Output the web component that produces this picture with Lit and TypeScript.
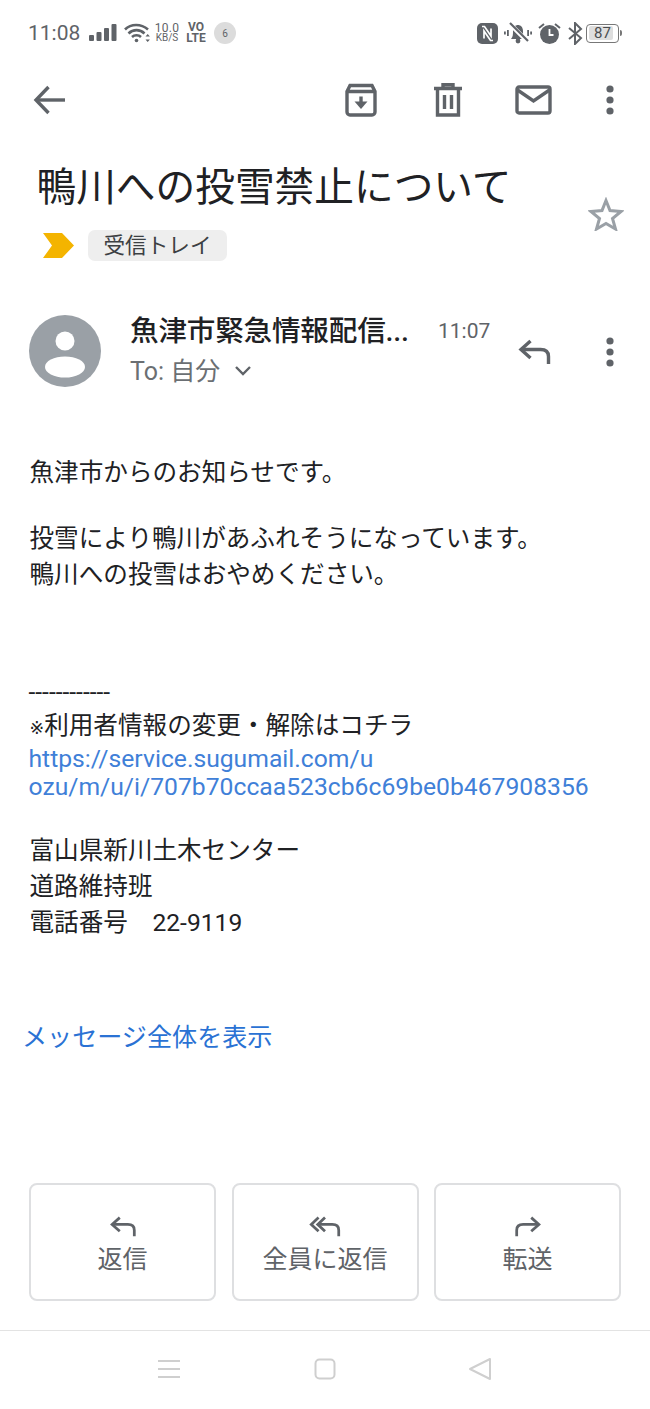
import { LitElement, html, css } from "lit";
import { customElement } from "lit/decorators.js";

const replyIcon = (w: number, h: number) => html`<svg width=${w} height=${h} viewBox="0 0 32 26" fill="none" stroke="#5f6368" stroke-width="3.4"><path d="M12 2 2.5 10.5 12 19"/><path d="M3 10.5H22C27 10.5 30 13 30 17.5V25"/></svg>`;
const dots = html`<svg width="10" height="30" viewBox="0 0 10 30" fill="#5f6368"><circle cx="5" cy="4" r="3.6"/><circle cx="5" cy="15" r="3.6"/><circle cx="5" cy="26" r="3.6"/></svg>`;

@customElement("app-root")
export class AppRoot extends LitElement {
  static styles = css`
    :host { display: block; width: 650px; height: 1409px; background: #fff; overflow: hidden; font-family: Roboto, "Noto Sans CJK JP", sans-serif; color: #202124; }
    .page { display: flex; flex-direction: column; height: 1409px; }
    .status { display: flex; align-items: center; height: 34px; margin-top: 16px; padding: 0 31px 0 28px; color: #5f6368; flex: none; }
    .time { font-size: 21px; width: 61px; }
    .st-left { display: flex; align-items: center; }
    .sig { margin-right: 6px; }
    .speed { display: flex; flex-direction: column; align-items: center; line-height: 10px; margin-left: 4px; width: 26px; }
    .speed b { font-weight: 400; font-size: 12px; letter-spacing: .3px; }
    .speed span { font-size: 10px; }
    .volte { display: flex; flex-direction: column; align-items: center; font-size: 12px; font-weight: 700; line-height: 11px; margin-left: 5px; width: 22px; }
    .badge { width: 22px; height: 22px; border-radius: 50%; background: #dcdcdc; font-size: 10px; display: flex; align-items: center; justify-content: center; margin-left: 7px; }
    .st-right { margin-left: auto; display: flex; align-items: center; }
    .ml6 { margin-left: 6px; }
    .ml7 { margin-left: 7px; }
    .batt { position: relative; width: 33px; height: 19px; border: 1.5px solid #777; border-radius: 4px; font-size: 15px; display: flex; align-items: center; justify-content: center; box-sizing: border-box; margin-left: 3px; color: #4a4d50; }
    .batt::before { content: ""; position: absolute; left: 1.5px; top: 1.5px; bottom: 1.5px; width: 24px; background: #dedede; border-radius: 2px; }
    .batt span { position: relative; }
    .batt::after { content: ""; position: absolute; right: -3.5px; top: 5px; width: 2px; height: 6px; background: #777; border-radius: 0 2px 2px 0; }
    .toolbar { display: flex; align-items: center; height: 40px; margin-top: 30px; padding: 0 35px 0 33px; flex: none; }
    .tb-right { margin-left: auto; display: flex; align-items: center; }
    .trash { margin-left: 55px; }
    .mail { margin-left: 52px; }
    .tdots { display: block; margin-left: 53px; height: 30px; }
    .subject-wrap { position: relative; flex: none; padding: 0 0 0 36.5px; margin-top: 42px; }
    h1 { margin: 0; font-size: 39.7px; font-weight: 400; line-height: 52px; color: #202124; white-space: nowrap; }
    .star { position: absolute; right: 26px; top: 35px; }
    .labels { display: flex; align-items: center; margin-top: 15px; padding-left: 43px; flex: none; height: 32px; }
    .chip { margin-left: 14px; background: #eeeeee; border-radius: 7px; height: 31px; width: 139px; font-size: 21.6px; line-height: 31px; text-align: center; color: #3c4043; }
    .sender { display: flex; height: 72px; margin-top: 54px; padding-left: 29px; flex: none; position: relative; }
    .who { margin-left: 29px; width: 370px; flex: none; }
    .nameline { display: flex; align-items: center; height: 40px; margin-top: -7px; }
    .name { font-size: 28.6px; font-weight: 500; color: #202124; white-space: nowrap; flex: none; width: 281px; overflow: hidden; letter-spacing: -.2px; }
    .t { margin-left: 27px; margin-top: 5px; font-size: 21px; color: #5f6368; white-space: nowrap; flex: none; }
    .to { display: flex; align-items: center; font-size: 25px; color: #6b6f73; height: 36px; margin-top: 3px; }
    .to svg { margin-left: 15px; margin-top: 3px; }
    .s-actions { position: absolute; left: 518px; top: 22px; display: flex; align-items: center; gap: 54px; }
    .d { display: block; height: 30px; }
    .body { padding-left: 29.5px; margin-top: 68px; font-size: 24.6px; line-height: 36px; color: #202124; flex: none; }
    .body p { margin: 0; white-space: nowrap; }
    .body .gap1 { margin-top: 30px; }
    .body .gap2 { margin-top: 82px; }
    .body .rule { line-height: 34px; height: 34px; font-size: 24.6px; margin-left: -1px; }
    .body .note { line-height: 34px; height: 36px; }
    .kome { font-family: "DejaVu Sans", sans-serif; font-size: 17.5px; }
    a { color: #3f80d8; text-decoration: none; font-size: 24.7px; line-height: 28px; display: block; white-space: nowrap; margin-left: -1px; }
    .body .gap3 { margin-top: 32px; }
    .more { margin-top: 79px; padding-left: 22px; font-size: 25.1px; line-height: 36px; color: #2a72d4; flex: none; }
    .bottom { margin-top: auto; flex: none; }
    .btns { display: flex; gap: 15.5px; padding-left: 29px; }
    .btn { width: 187px; height: 118px; box-sizing: border-box; border: 2px solid #dedfe1; border-radius: 8px; display: flex; flex-direction: column; align-items: center; padding-top: 31px; font-size: 25px; line-height: 36px; color: #5f6368; }
    .btn svg { display: block; margin-bottom: 5px; }
    .nav { border-top: 1.5px solid #e3e3e3; margin-top: 29px; height: 79px; box-sizing: border-box; display: flex; align-items: center; padding: 0 158px 3px 157px; justify-content: space-between; }
  `;

  render() {
    return html`<div class="page">
      <div class="status">
        <div class="st-left">
          <span class="time">11:08</span>
          <svg class="sig" width="29" height="20" viewBox="0 0 29 20" fill="#5f6368"><rect x="0" y="12" width="5" height="6" rx="1"/><rect x="7.500" y="9" width="5" height="9" rx="1"/><rect x="15" y="5" width="5" height="13" rx="1"/><rect x="22.500" y="1" width="5" height="17" rx="1"/></svg>
          <svg width="26" height="22" viewBox="0 0 26 22" fill="none" stroke="#5f6368" stroke-width="2.600"><path d="M1 7.500C7 1.500 17 1.500 24 7.500"/><path d="M4.500 11.500C9 7 16 7 20.500 11.500"/><path d="M8 15C10.500 12.700 14.500 12.700 17 15"/><circle cx="12.500" cy="18.500" r="1.800" fill="#5f6368" stroke="none"/><path d="M21.500 14.500l2.200-2.500 2.200 2.500zM21.500 17.500l2.200 2.500 2.200-2.500z" fill="#5f6368" stroke="none"/></svg>
          <div class="speed"><b>10.0</b><span>KB/S</span></div>
          <div class="volte"><span>VO</span><span>LTE</span></div>
          <div class="badge">6</div>
        </div>
        <div class="st-right">
          <svg width="21" height="21" viewBox="0 0 21 21"><rect width="21" height="21" rx="5" fill="#5f6368"/><path d="M5 3.500h2.500L14 13V5.500" fill="none" stroke="#fff" stroke-width="1.700"/><path d="M16 17.500h-2.500L7 8v7.500" fill="none" stroke="#fff" stroke-width="1.700"/></svg>
          <svg class="ml6" width="28" height="22" viewBox="0 0 28 22" fill="#5f6368"><path d="M7 17c2-2 2-5 2-8 0-4 2.500-6 5-6s5 2 5 6c0 3 0 6 2 8H7z"/><circle cx="14" cy="19" r="2.400"/><path d="M5 1 24 20" stroke="#fff" stroke-width="4.500"/><path d="M6 1 24 19" stroke="#5f6368" stroke-width="2.200"/><rect x="3" y="8" width="1.800" height="6"/><rect x="0" y="9.500" width="1.800" height="3"/><rect x="23.200" y="8" width="1.800" height="6"/><rect x="26.200" y="9.500" width="1.800" height="3"/></svg>
          <svg class="ml6" width="23" height="23" viewBox="0 0 23 23"><circle cx="11.500" cy="12.500" r="9.500" fill="#5f6368"/><path d="M11.500 7v6h4" fill="none" stroke="#fff" stroke-width="1.800"/><path d="M1 6l5-4M22 6l-5-4" stroke="#5f6368" stroke-width="2"/></svg>
          <svg class="ml7" width="15" height="23" viewBox="0 0 15 23" fill="none" stroke="#5f6368" stroke-width="2"><path d="M1 6l12 10-6 6V1l6 6L1 17"/></svg>
          <div class="batt"><span>87</span></div>
        </div>
      </div>

      <div class="toolbar">
        <svg width="32" height="30" viewBox="0 0 32 30" fill="none" stroke="#5f6368" stroke-width="3.400"><path d="M15.500 2 3 15l12.500 13"/><path d="M3 15h29"/></svg>
        <div class="tb-right">
          <svg width="34" height="34" viewBox="0 0 34 34" fill="none" stroke="#5f6368" stroke-width="3.400"><path d="M3 8.500 6 2.500H28L31 8.500V29a3 3 0 0 1-3 3H6a3 3 0 0 1-3-3zM3 8.500H31"/><path d="M17 13.500v6"/><path d="M10.500 18.500H23.500L17 26z" fill="#5f6368" stroke="none"/></svg>
          <svg class="trash" width="30" height="34" viewBox="0 0 30 34" fill="none" stroke="#5f6368" stroke-width="3.400"><path d="M1 5.500H29M10 5V1.800H20V5"/><path d="M4.500 6V32H25.500V6"/><path d="M11.500 12V26M18.500 12V26"/></svg>
          <svg class="mail" width="37" height="30" viewBox="0 0 37 30" fill="none" stroke="#5f6368" stroke-width="3.400"><rect x="2" y="2" width="33" height="26" rx="2"/><path d="M2.500 5 18.500 16 34.500 5"/></svg>
          <span class="tdots">${dots}</span>
        </div>
      </div>

      <div class="subject-wrap">
        <h1>鴨川への投雪禁止について</h1>
        <svg class="star" width="36" height="34" viewBox="0 0 36 34" fill="none" stroke="#9aa0a6" stroke-width="3"><path d="M18 3.500 22 13.500 33 14.500 24.500 21.500 27.500 32 18 26.500 8.500 32 11.500 21.500 3 14.500 14 13.500z"/></svg>
      </div>
      <div class="labels">
        <svg width="31" height="27" viewBox="0 0 31 27" fill="#f4b400"><path d="M0 1H19L31 13.500 19 26H0L9 13.500z"/></svg>
        <div class="chip">受信トレイ</div>
      </div>

      <div class="sender">
        <svg width="72" height="72" viewBox="0 0 72 72"><circle cx="36" cy="36" r="36" fill="#9aa0a6"/><circle cx="36" cy="26" r="9.500" fill="#fff"/><ellipse cx="36" cy="52" rx="20" ry="10.500" fill="#fff"/></svg>
        <div class="who">
          <div class="nameline"><span class="name">魚津市緊急情報配信...</span><span class="t">11:07</span></div>
          <div class="to">To: 自分<svg width="16" height="10" viewBox="0 0 16 10" fill="none" stroke="#5f6368" stroke-width="2.400"><path d="M1 1l7 7 7-7"/></svg></div>
        </div>
        <div class="s-actions">${replyIcon(33, 26)}<span class="d">${dots}</span></div>
      </div>

      <div class="body">
        <p>魚津市からのお知らせです。</p>
        <p class="gap1">投雪により鴨川があふれそうになっています。</p>
        <p>鴨川への投雪はおやめください。</p>
        <p class="gap2 rule">------------</p>
        <p class="note"><span class="kome">※</span>利用者情報の変更・解除はコチラ</p>
        <a>https://service.sugumail.com/u</a>
        <a>ozu/m/u/i/707b70ccaa523cb6c69be0b467908356</a>
        <p class="gap3">富山県新川土木センター</p>
        <p>道路維持班</p>
        <p>電話番号　22-9119</p>
      </div>

      <div class="more">メッセージ全体を表示</div>

      <div class="bottom">
        <div class="btns">
          <div class="btn">${replyIcon(28, 21)}<span>返信</span></div>
          <div class="btn"><svg width="32" height="21" viewBox="0 0 38 26" fill="none" stroke="#5f6368" stroke-width="3.400"><path d="M19 2 10 10.500 19 19"/><path d="M11 2 2 10.500 11 19"/><path d="M11 10.500H28C33 10.500 36 13 36 17.500V25"/></svg><span>全員に返信</span></div>
          <div class="btn"><svg width="28" height="21" viewBox="0 0 32 26" fill="none" stroke="#5f6368" stroke-width="3.400"><path d="M20 2 29.500 10.500 20 19"/><path d="M29 10.500H10C5 10.500 2 13 2 17.500V25"/></svg><span>転送</span></div>
        </div>
        <div class="nav">
          <svg width="24" height="20" viewBox="0 0 24 20" stroke="#cfcfcf" stroke-width="2"><path d="M1 2H23M1 10H23M1 18H23"/></svg>
          <svg width="22" height="22" viewBox="0 0 22 22" fill="none" stroke="#cfcfcf" stroke-width="2"><rect x="1.500" y="1.500" width="19" height="19" rx="4"/></svg>
          <svg width="24" height="24" viewBox="0 0 24 24" fill="none" stroke="#cfcfcf" stroke-width="2" stroke-linejoin="round"><path d="M22 2V22L2 12z"/></svg>
        </div>
      </div>
    </div>`;
  }
}
